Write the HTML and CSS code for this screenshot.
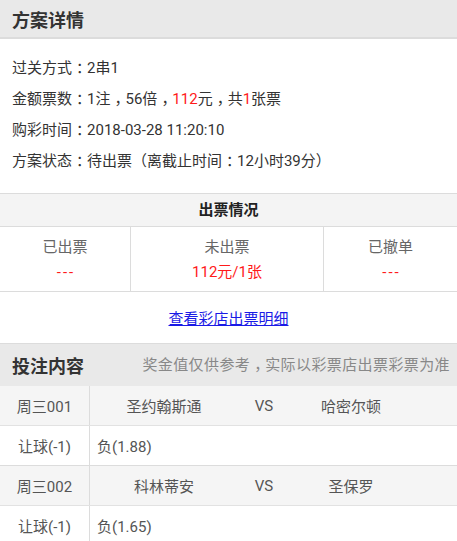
FILE: index.html
```html
<!DOCTYPE html>
<html lang="zh">
<head>
<meta charset="utf-8">
<link rel="stylesheet" href="styles.css">
</head>
<body>
<div class="page">
  <div class="head"><span class="head-title">方案详情</span></div>
  <div class="info">
    <div class="info-line">过关方式<span class="pc">：</span>2串1</div>
    <div class="info-line">金额票数<span class="pc">：</span>1注<span class="pc">，</span>56倍<span class="pc">，</span><span class="red">112</span>元<span class="pc">，</span>共<span class="red">1</span>张票</div>
    <div class="info-line">购彩时间<span class="pc">：</span>2018-03-28 11:20:10</div>
    <div class="info-line">方案状态<span class="pc">：</span>待出票（离截止时间<span class="pc">：</span>12小时39分）</div>
  </div>
  <div class="ticket">
    <div class="ticket-head">出票情况</div>
    <div class="ticket-grid">
      <div class="cell"><div class="cell-label">已出票</div><div class="cell-val dash">---</div></div>
      <div class="cell"><div class="cell-label">未出票</div><div class="cell-val">112元/1张</div></div>
      <div class="cell"><div class="cell-label">已撤单</div><div class="cell-val dash">---</div></div>
    </div>
    <div class="link-row"><a class="link" href="#">查看彩店出票明细</a></div>
  </div>
  <div class="head bet-head"><span class="head-title">投注内容</span><span class="note">奖金值仅供参考<span class="pc">，</span>实际以彩票店出票彩票为准</span></div>
  <div class="match">
    <div class="row gray"><div class="c1">周三001</div><div class="c2"><span class="team t1">圣约翰斯通</span><span class="vs">VS</span><span class="team t2">哈密尔顿</span></div></div>
    <div class="row"><div class="c1">让球(-1)</div><div class="c2 pick">负(1.88)</div></div>
  </div>
  <div class="match">
    <div class="row gray"><div class="c1">周三002</div><div class="c2"><span class="team t1">科林蒂安</span><span class="vs">VS</span><span class="team t2">圣保罗</span></div></div>
    <div class="row"><div class="c1">让球(-1)</div><div class="c2 pick">负(1.65)</div></div>
  </div>
</div>
</body>
</html>
```

FILE: styles.css
```css
html, body {
  margin: 0;
  padding: 0;
  background: #fff;
}
body {
  font-family: Roboto, "Noto Sans CJK SC", sans-serif;
  color: #333;
  font-size: 15px;
}
.page {
  width: 457px;
  overflow: hidden;
}
.head {
  height: 37px;
  background: #e9e9e9;
  border-bottom: 2px solid #dcdcdc;
  display: flex;
  align-items: center;
  justify-content: space-between;
  padding: 0 7px 0 12px;
}
.head-title {
  font-size: 18px;
  font-weight: bold;
  color: #333;
}
.pc {
  padding-left: 0.27em;
  letter-spacing: -0.27em;
}
.info {
  padding: 14px 0 16px 12px;
}
.info-line {
  height: 31px;
  line-height: 31px;
  color: #333;
}
.red { color: #ff1a1a; }
.ticket {
  border-top: 1px solid #dcdcdc;
}
.ticket-head {
  height: 32px;
  line-height: 32px;
  background: #f4f4f4;
  text-align: center;
  font-weight: bold;
  color: #222;
  border-bottom: 1px solid #dcdcdc;
}
.ticket-grid {
  display: grid;
  grid-template-columns: 131px 193px 1fr;
  border-bottom: 1px solid #dcdcdc;
}
.cell {
  height: 64px;
  text-align: center;
  border-right: 1px solid #dcdcdc;
  padding-top: 10px;
  box-sizing: border-box;
}
.cell:last-child { border-right: none; }
.cell-label {
  color: #666;
  line-height: 20px;
}
.cell-val {
  color: #ff1a1a;
  line-height: 20px;
  margin-top: 5px;
}
.cell-val.dash {
  letter-spacing: 2px;
  padding-left: 2px;
}
.link-row {
  height: 51px;
  display: flex;
  align-items: center;
  justify-content: center;
  border-bottom: 1px solid #dcdcdc;
}
.link {
  color: #1a1ae6;
  text-decoration: underline;
}
.bet-head {
  height: 42px;
  border-bottom: none;
}
.note {
  font-size: 15px;
  color: #888;
  letter-spacing: 0.4px;
  line-height: 20px;
}
.match {
  border-bottom: 1px solid #dcdcdc;
}
.row {
  display: flex;
  height: 39px;
  align-items: stretch;
  color: #555;
}
.row.gray {
  background: #f5f5f5;
  border-bottom: 1px solid #e2e2e2;
}
.c1 {
  width: 89px;
  border-right: 1px solid #dcdcdc;
  display: flex;
  align-items: center;
  justify-content: center;
}
.c2 {
  flex: 1;
  display: flex;
  align-items: center;
}
.team {
  text-align: center;
}
.t1 { width: 148px; }
.vs {
  width: 52px;
  text-align: center;
}
.t2 { width: 122px; }
.pick {
  padding-left: 7px;
}
```
